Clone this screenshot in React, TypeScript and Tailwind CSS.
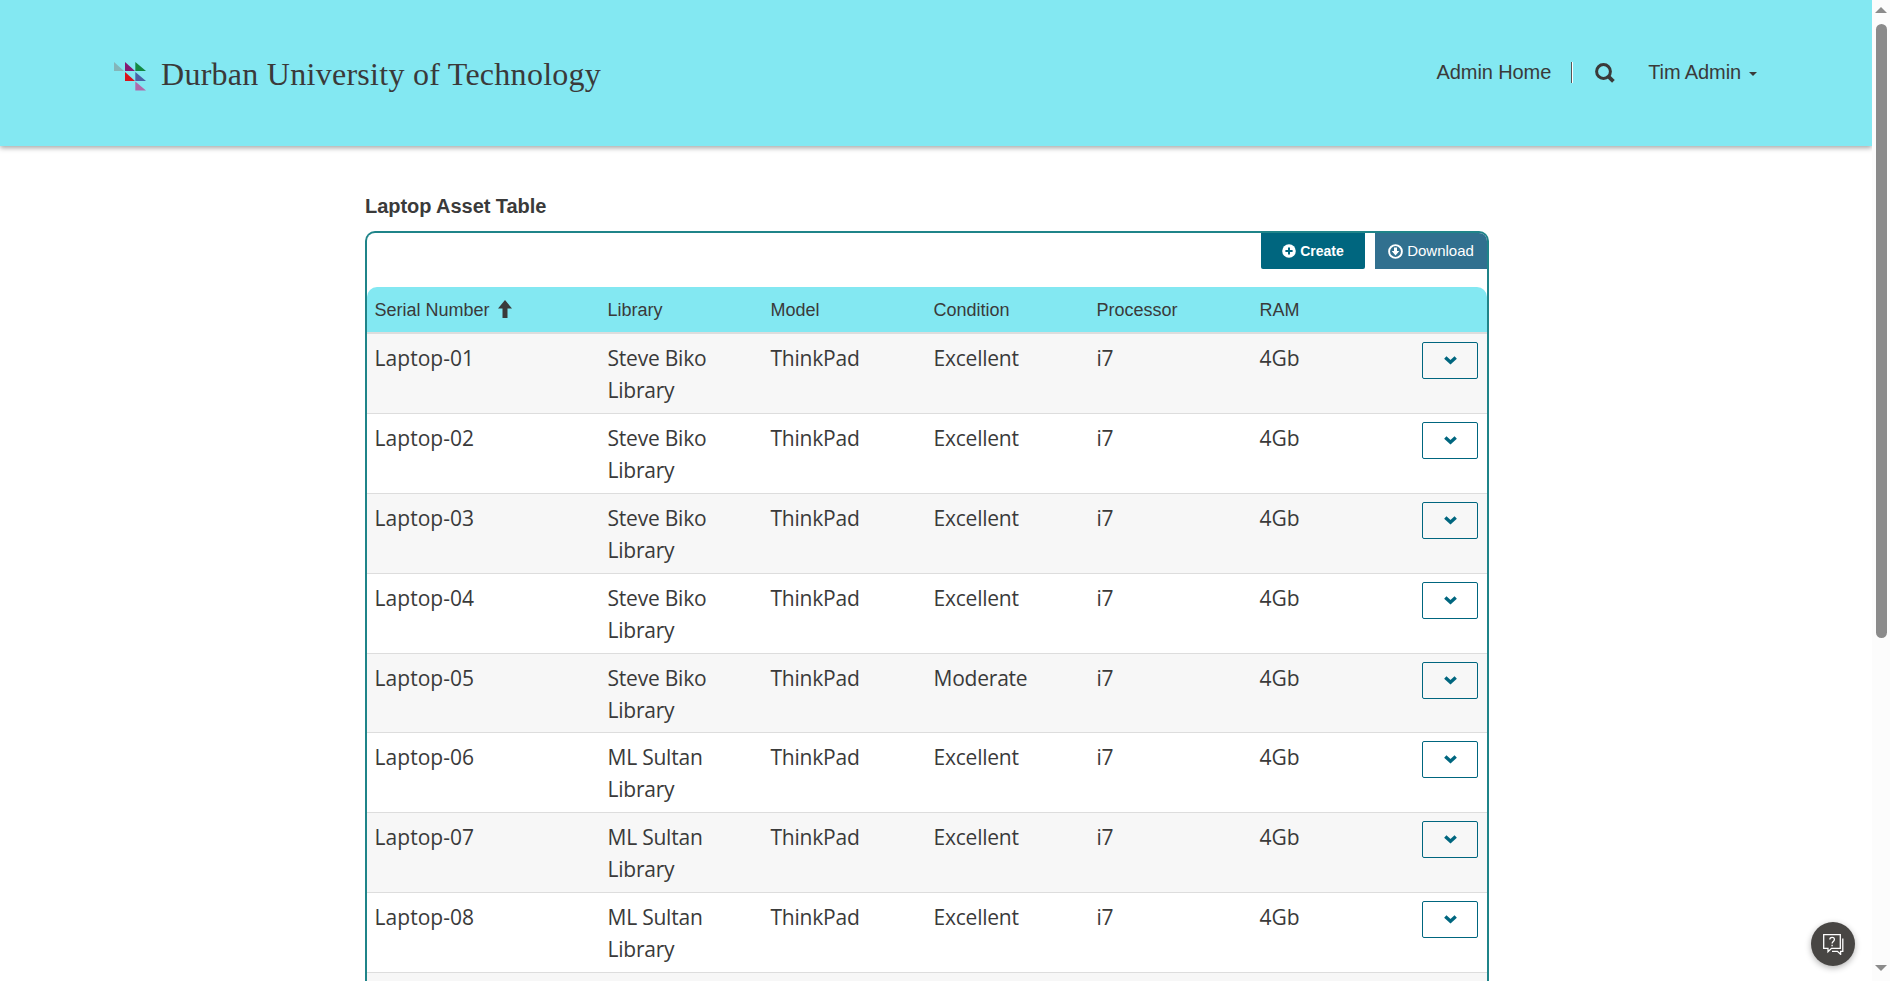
import React from "react";

const cols = ["Library", "Model", "Condition", "Processor", "RAM"];

const rows = Array.from({ length: 8 }, (_, i) => ({
  serial: `Laptop-0${i + 1}`,
  library: i < 5 ? "Steve Biko Library" : "ML Sultan Library",
  model: "ThinkPad",
  condition: i === 4 ? "Moderate" : "Excellent",
  processor: "i7",
  ram: "4Gb",
}));

function Logo() {
  return (
    <svg width="32" height="29" viewBox="0 0 32 29" className="shrink-0">
      <path d="M0 0L10 9H0z" fill="#84b5b9" />
      <path d="M11 0L21 9H11z" fill="#851a72" />
      <path d="M21.3 0L32 9H21.3z" fill="#138a43" />
      <path d="M11 10L21 19H11z" fill="#d9131d" />
      <path d="M21.3 10L32 19H21.3z" fill="#4c62a5" />
      <path d="M21.3 19.5L32 28.5H21.3z" fill="#b06aab" />
    </svg>
  );
}

function Header() {
  return (
    <header className="flex h-[146px] shrink-0 items-start bg-[#83e8f2] pl-[114px] pr-[115px] shadow-[0_2px_5px_rgba(0,0,0,0.35)]">
      <div className="flex pt-[62px]">
        <Logo />
        <span className="-mt-[7px] ml-[15px] whitespace-nowrap font-['Liberation_Serif',serif] text-[32px] leading-[38px] tracking-[0.27px]">
          Durban University of Technology
        </span>
      </div>
      <nav className="ml-auto flex items-center whitespace-nowrap pt-[58px] text-[20px] leading-[28px]">
        <span className="tracking-[-0.1px]">Admin Home</span>
        <span className="ml-[20px] h-[21px] w-[2px] border-l border-r border-l-[#555] border-r-white" />
        <svg width="20" height="20" viewBox="0 0 20 20" className="ml-[22px] mt-[2px]" fill="none" stroke="#3a3a3a">
          <circle cx="8.5" cy="8.5" r="6.9" strokeWidth="3" />
          <path d="M13.3 13.3L18.4 18.4" strokeWidth="3.8" />
        </svg>
        <span className="ml-[33px] tracking-[-0.1px]">Tim Admin</span>
        <span className="ml-[8px] mt-[3px] border-x-4 border-t-4 border-x-transparent border-t-[#3a3a3a]" />
      </nav>
    </header>
  );
}

function Toolbar() {
  return (
    <div className="flex h-[54px] items-start justify-end gap-[10px] text-white">
      <button className="flex h-[36px] w-[104px] items-center justify-center gap-[4px] rounded-b-[2px] bg-[#00667f] text-[14px] font-bold">
        <svg width="14" height="14" viewBox="0 0 14 14" className="-mt-px">
          <circle cx="7" cy="7" r="6.8" fill="#fff" />
          <path d="M7 3.4V10.6M3.4 7H10.6" stroke="#00667f" strokeWidth="2" />
        </svg>
        Create
      </button>
      <button className="flex h-[36px] w-[112px] items-center justify-center gap-[4px] rounded-tr-[8px] bg-[#31708f] text-[15px]">
        <svg width="15" height="15" viewBox="0 0 15 15">
          <circle cx="7.5" cy="7.5" r="6.4" fill="none" stroke="#fff" strokeWidth="1.9" />
          <path d="M6 3.5H9V7H11.3L7.5 11.5L3.7 7H6z" fill="#fff" />
        </svg>
        <span className="pt-px">Download</span>
      </button>
    </div>
  );
}

const grid = "grid grid-cols-[233px_163px_163px_163px_163px_235px]";

function AssetTable() {
  return (
    <div className="w-[1124px] rounded-t-[10px] border-2 border-b-0 border-[#1f8489]">
      <Toolbar />
      <div className={`${grid} h-[47px] overflow-hidden rounded-t-[10px] border-b-2 border-[#ddd] bg-[#83e8f2] text-[18px] leading-[47px]`}>
        <div className="flex items-center gap-[8px] pl-[7.5px]">
          Serial Number
          <svg width="14" height="18" viewBox="0 0 14 18" className="-mt-[4px]" fill="#3a3a3a">
            <path d="M7 0L14 8.5H9.5V18H4.5V8.5H0z" />
          </svg>
        </div>
        {cols.map((c) => (
          <div key={c} className="pl-[7.5px]">{c}</div>
        ))}
      </div>
      {rows.map((r, i) => (
        <div
          key={r.serial}
          className={`${grid} ${i === 4 ? "h-[79px]" : "h-[80px]"} border-b border-[#ddd] pt-[8px] font-['Open_Sans',sans-serif] text-[21px] leading-[31.5px] ${i % 2 ? "bg-white" : "bg-[#f7f7f7]"}`}
        >
          <div className="px-[7.5px] pt-px tracking-[0.05px]">{r.serial}</div>
          {[r.library, r.model, r.condition, r.processor].map((t) => (
            <div key={t} className="px-[7.5px] pt-px tracking-[-0.22px]">{t}</div>
          ))}
          <div className="flex items-start justify-between pl-[7.5px] pr-[9px]">
            <span className="pt-px">{r.ram}</span>
            <button className="flex h-[37px] w-[56px] items-center justify-center rounded-[2px] border border-[#00667f]">
              <svg width="13" height="9" viewBox="0 0 13 9" fill="none" stroke="#00667f" strokeWidth="3.4">
                <path d="M1.3 1.5L6.5 6.3L11.7 1.5" />
              </svg>
            </button>
          </div>
        </div>
      ))}
      <div className="h-[80px] bg-[#f7f7f7]" />
    </div>
  );
}

export default function App() {
  return (
    <div className="relative flex h-[981px] w-[1890px] overflow-hidden bg-white font-['Liberation_Sans',Arial,sans-serif] text-[#3a3a3a]">
      <div className="flex w-[1872px] flex-col overflow-hidden">
        <Header />
        <main className="pl-[365px] pt-[46px]">
          <h1 className="pb-[11px] text-[20px] font-bold leading-[28px] tracking-[-0.05px]">Laptop Asset Table</h1>
          <AssetTable />
        </main>
      </div>
      <div className="flex w-[18px] flex-col items-center bg-[#fcfcfc]">
        <span className="mt-[7px] border-x-[6px] border-b-[6px] border-x-transparent border-b-[#8b8b8b]" />
        <span className="mt-[11px] h-[614px] w-[11px] rounded-full bg-[#8b8b8b]" />
        <span className="mb-[10px] mt-auto border-x-[6px] border-t-[6px] border-x-transparent border-t-[#8b8b8b]" />
      </div>
      <button className="absolute bottom-[15px] right-[35px] flex h-[44px] w-[44px] items-center justify-center rounded-full bg-[#484644] shadow-[0_2px_6px_rgba(0,0,0,0.3)]">
        <svg width="21" height="21" viewBox="0 0 21 21" fill="none" stroke="#fff" strokeWidth="1.3">
          <path d="M0.7 0.7H17.3V14.3H8.5L5 17.8V14.3H0.7z" />
          <path d="M19.8 4.5V17.3H17.6V20.3L14.4 17.3H9" />
          <path d="M6.8 5.6C6.8 2.6 11.4 2.6 11.4 5.5C11.4 7.4 9.1 7.6 9.1 9.6M9.1 10.8V12.3" />
        </svg>
      </button>
    </div>
  );
}
